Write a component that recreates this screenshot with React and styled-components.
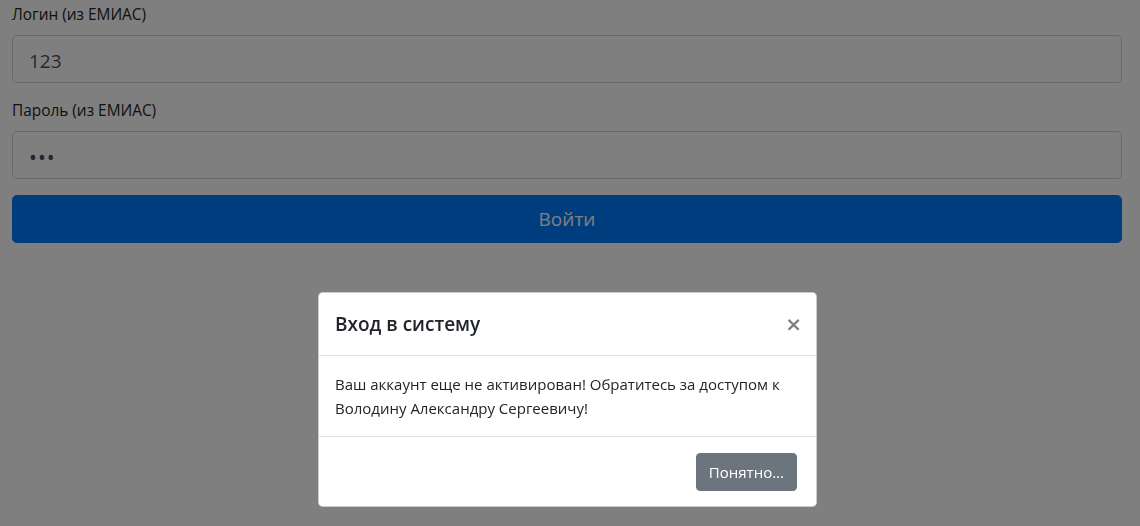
import React from "react";
import styled, { createGlobalStyle } from "styled-components";

const GlobalStyle = createGlobalStyle`
  html, body {
    margin: 0;
    padding: 0;
    background: #fff;
    font-family: "Open Sans", "Noto Sans", sans-serif;
    color: #212529;
  }
  * { box-sizing: border-box; }
`;

const Page = styled.div`
  padding: 3px 18px 0 12px;
  height: 526px;
  overflow: hidden;
`;

const FormGroup = styled.div`
  margin-bottom: 16px;
`;

const Label = styled.label`
  display: block;
  font-size: 15.4px;
  line-height: 24px;
  margin-bottom: 8px;
`;

const Input = styled.input`
  display: block;
  width: 100%;
  height: 48px;
  padding: 10px 16px 6px;
  font-family: inherit;
  font-size: 19px;
  color: #495057;
  background: #fff;
  border: 1px solid #ced4da;
  border-radius: 4.8px;
  outline: none;

  &[type="password"] {
    font-size: 21px;
    letter-spacing: 1px;
  }
`;

const SubmitButton = styled.button`
  display: block;
  width: 100%;
  height: 48px;
  font-family: inherit;
  font-size: 19px;
  color: #fff;
  background: #007bfd;
  border: 1px solid #007bfd;
  border-radius: 4.8px;
`;

const Backdrop = styled.div`
  position: fixed;
  inset: 0;
  background: rgba(0, 0, 0, 0.5);
`;

const ModalLayer = styled.div`
  position: fixed;
  inset: 0;
  display: flex;
  align-items: flex-start;
  padding: 292px 0 0 318px;
`;

const Dialog = styled.div`
  width: 499px;
  background: #fff;
  border: 1px solid rgba(0, 0, 0, 0.2);
  border-radius: 4.8px;
  display: flex;
  flex-direction: column;
`;

const Header = styled.div`
  display: flex;
  align-items: center;
  justify-content: space-between;
  padding: 16px;
  border-bottom: 1px solid #dee2e6;
`;

const Title = styled.h5`
  margin: 0;
  font-size: 19px;
  font-weight: 600;
  line-height: 30px;
`;

const Close = styled.button`
  border: 0;
  background: transparent;
  padding: 0;
  margin-right: -2px;
  font-family: "DejaVu Sans", sans-serif;
  font-size: 20px;
  font-weight: 700;
  line-height: 1;
  color: #000;
  opacity: 0.5;
`;

const Body = styled.div`
  padding: 16px;
  font-size: 15px;
  line-height: 24px;
  border-bottom: 1px solid #dee2e6;
`;

const Footer = styled.div`
  display: flex;
  justify-content: flex-end;
  padding: 12px 15px 11px 12px;
`;

const SecondaryButton = styled.button`
  margin: 4px;
  height: 38px;
  padding: 0 12px;
  font-family: inherit;
  font-size: 15px;
  color: #fff;
  background: #6c757d;
  border: 1px solid #6c757d;
  border-radius: 4px;
`;

export default function App() {
  return (
    <>
      <GlobalStyle />
      <Page>
        <FormGroup>
          <Label>Логин (из ЕМИАС)</Label>
          <Input defaultValue="123" />
        </FormGroup>
        <FormGroup>
          <Label>Пароль (из ЕМИАС)</Label>
          <Input type="password" defaultValue="123" />
        </FormGroup>
        <SubmitButton>Войти</SubmitButton>
      </Page>
      <Backdrop />
      <ModalLayer>
        <Dialog>
          <Header>
            <Title>Вход в систему</Title>
            <Close>×</Close>
          </Header>
          <Body>
            Ваш аккаунт еще не активирован! Обратитесь за доступом к Володину
            Александру Сергеевичу!
          </Body>
          <Footer>
            <SecondaryButton>Понятно...</SecondaryButton>
          </Footer>
        </Dialog>
      </ModalLayer>
    </>
  );
}
